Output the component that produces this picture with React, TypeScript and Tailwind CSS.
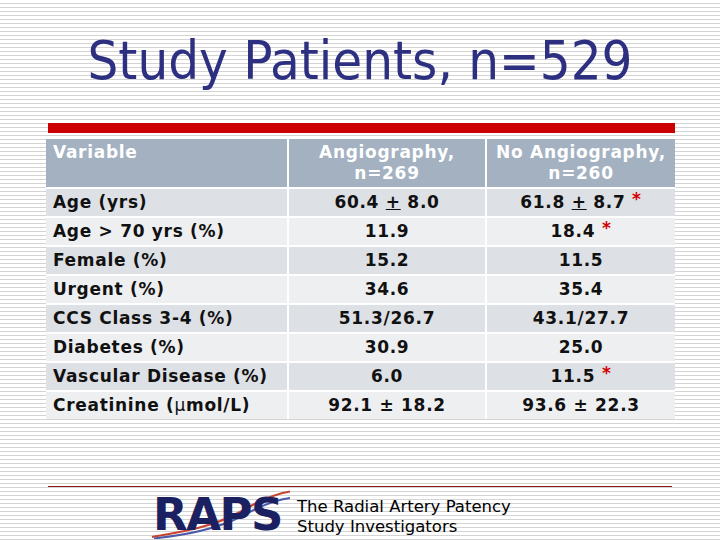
import React from "react";

const rows: { label: React.ReactNode; a: React.ReactNode; b: React.ReactNode; dark: boolean }[] = [
  {
    label: "Age (yrs)",
    a: (<>60.4 <span className="underline">+</span> 8.0</>),
    b: (<>61.8 <span className="underline">+</span> 8.7 <Star /></>),
    dark: true,
  },
  { label: "Age > 70 yrs (%)", a: "11.9", b: (<>18.4 <Star /></>), dark: false },
  { label: "Female (%)", a: "15.2", b: "11.5", dark: true },
  { label: "Urgent (%)", a: "34.6", b: "35.4", dark: false },
  { label: "CCS Class 3-4 (%)", a: "51.3/26.7", b: "43.1/27.7", dark: true },
  { label: "Diabetes (%)", a: "30.9", b: "25.0", dark: false },
  { label: "Vascular Disease (%)", a: "6.0", b: (<>11.5 <Star /></>), dark: true },
  { label: (<>Creatinine (<span className="font-normal">μ</span>mol/L)</>), a: "92.1 ± 18.2", b: "93.6 ± 22.3", dark: false },
];

function Star() {
  return <span className="text-[#d40000] relative -top-[3px]">*</span>;
}

export default function App() {
  return (
    <div className="w-[720px] h-[540px] overflow-hidden flex flex-col bg-[repeating-linear-gradient(to_bottom,#ffffff_0px,#ffffff_3px,#d4d4d4_3px,#d4d4d4_4px)]">
      <h1 className="h-[123px] shrink-0 pt-[29px] text-center text-[54px] leading-[64px] text-[#2d2f80] font-['DejaVu_Sans',sans-serif] [font-stretch:condensed]">
        Study Patients, n=529
      </h1>
      <div className="ml-[48px] w-[627px] h-[10px] shrink-0 bg-[#cc0000]" />
      <div className="ml-[46px] mt-[6px] w-[629px] shrink-0 bg-white grid grid-cols-[241px_196px_188px] gap-[2px] font-['DejaVu_Sans',sans-serif] font-bold text-[17px] tracking-[0.7px] text-[#111]">
        <div className="h-[48px] bg-[#a3b1c1] text-white px-[7px] pt-[3px] leading-[21px]">Variable</div>
        <div className="h-[48px] bg-[#a3b1c1] text-white text-center pt-[3px] leading-[21px]">
          Angiography,<br />n=269
        </div>
        <div className="h-[48px] bg-[#a3b1c1] text-white text-center pt-[3px] leading-[21px]">
          No Angiography,<br />n=260
        </div>
        {rows.map((r, i) => {
          const bg = r.dark ? "bg-[#dde0e5]" : "bg-[#eeeff1]";
          return (
            <React.Fragment key={i}>
              <div className={`h-[27px] ${bg} px-[7px] flex items-center whitespace-nowrap`}>{r.label}</div>
              <div className={`h-[27px] ${bg} flex items-center justify-center whitespace-pre`}>{r.a}</div>
              <div className={`h-[27px] ${bg} flex items-center justify-center whitespace-pre`}>{r.b}</div>
            </React.Fragment>
          );
        })}
      </div>
      <div className="ml-[48px] mt-[67px] w-[624px] h-[1px] shrink-0 bg-[#8e1b1b]" />
      <div className="ml-[150px] mt-[3px] flex items-start">
        <div className="relative w-[142px] h-[49px]">
          <svg className="absolute left-0 top-0" width="142" height="49" viewBox="0 0 142 49">
            <path d="M2 47 C 30 42, 60 38, 90 22 C 110 10, 125 4, 140 1.5" fill="none" stroke="#c8432f" strokeWidth="2.2" />
            <path d="M4 48.5 C 34 45, 66 40, 94 25 C 112 15, 126 10, 140 8" fill="none" stroke="#4a5aa8" strokeWidth="2" />
          </svg>
          <div className="absolute left-[3px] top-[4px] text-[45px] leading-[42px] font-black text-[#1b2160] font-['DejaVu_Sans',sans-serif] tracking-[-1.5px] whitespace-nowrap">
            RAPS
          </div>
        </div>
        <div className="ml-[5px] mt-[7px] text-[16.5px] leading-[20px] text-black font-['DejaVu_Sans',sans-serif] whitespace-nowrap">
          The Radial Artery Patency<br />Study Investigators
        </div>
      </div>
    </div>
  );
}
